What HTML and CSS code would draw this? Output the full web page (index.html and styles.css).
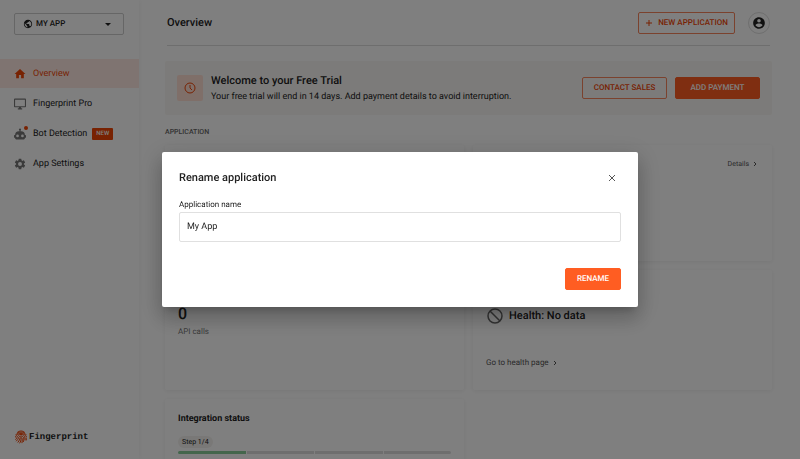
FILE: index.html
```html
<!doctype html>
<html lang="en">
<head>
  <meta charset="utf-8">
  <meta name="viewport" content="width=device-width, initial-scale=1">
  <title>Overview | Fingerprint</title>
  <link rel="stylesheet" href="styles.css">
</head>
<body>
  <div class="app">
    <aside class="sidebar">
      <label class="app-select">
        <svg width="10" height="10" viewBox="0 0 24 24"><path d="M12 2C6.480 2 2 6.480 2 12s4.480 10 10 10 10-4.480 10-10S17.520 2 12 2zm-1 17.930c-3.950-.49-7-3.850-7-7.930 0-.62.080-1.210.21-1.790L9 15v1c0 1.100.9 2 2 2v1.930zm6.900-2.540c-.26-.81-1-1.390-1.900-1.390h-1v-3c0-.55-.45-1-1-1H8v-2h2c.55 0 1-.45 1-1V7h2c1.100 0 2-.9 2-2v-.41c2.930 1.190 5 4.060 5 7.410 0 2.080-.8 3.970-2.100 5.390z"/></svg>
        <select aria-label="Application">
          <option>MY APP</option>
        </select>
        <svg width="6" height="3" viewBox="0 0 10 5"><path d="M0 0l5 5 5-5z"/></svg>
      </label>

      <nav class="nav">
        <a class="nav-item active" href="#">
          <svg width="12" height="12" viewBox="1 2 22 20"><path d="M10 20v-6h4v6h5v-8h3L12 3 2 12h3v8z"/></svg>
          Overview
        </a>
        <a class="nav-item" href="#">
          <svg width="12" height="12" viewBox="1 1 22 22"><path d="M21 2H3C1.900 2 1 2.900 1 4v12c0 1.100.9 2 2 2h7v2H8v2h8v-2h-2v-2h7c1.100 0 2-.9 2-2V4c0-1.100-.9-2-2-2zm0 14H3V4h18v12z"/></svg>
          Fingerprint Pro
        </a>
        <a class="nav-item" href="#">
          <span class="icon-dot">
            <svg width="12" height="12" viewBox="1 1 22 22"><path fill-rule="evenodd" d="M12 2a2 2 0 0 1 2 2c0 .74-.4 1.390-1 1.730V7h1a7 7 0 0 1 7 7h1a1 1 0 0 1 1 1v3a1 1 0 0 1-1 1h-1v1a2 2 0 0 1-2 2H5a2 2 0 0 1-2-2v-1H2a1 1 0 0 1-1-1v-3a1 1 0 0 1 1-1h1a7 7 0 0 1 7-7h1V5.730A2 2 0 0 1 12 2zM7.500 13a2.500 2.500 0 1 0 0 5 2.500 2.500 0 0 0 0-5zm9 0a2.500 2.500 0 1 0 0 5 2.500 2.500 0 0 0 0-5z"/></svg>
          </span>
          Bot Detection
          <span class="tag">NEW</span>
        </a>
        <a class="nav-item" href="#">
          <svg width="12" height="12" viewBox="1 1 22 22"><path fill-rule="evenodd" d="M19.140 12.940c.04-.3.060-.61.060-.94 0-.32-.02-.64-.07-.94l2.030-1.580c.18-.14.23-.41.12-.61l-1.920-3.320c-.12-.22-.37-.29-.59-.22l-2.390.96c-.5-.38-1.030-.7-1.620-.94l-.36-2.540c-.04-.24-.24-.41-.48-.41h-3.840c-.24 0-.43.17-.47.41l-.36 2.540c-.59.24-1.130.57-1.620.94l-2.390-.96c-.22-.08-.47 0-.59.22L2.740 8.870c-.12.21-.08.47.12.61l2.030 1.580c-.05.3-.09.63-.09.94s.02.64.070.94l-2.030 1.580c-.18.14-.23.41-.12.61l1.920 3.320c.12.22.37.29.59.22l2.390-.96c.5.38 1.030.7 1.620.94l.36 2.540c.05.24.24.41.48.41h3.840c.24 0 .44-.17.47-.41l.36-2.540c.59-.24 1.130-.56 1.620-.94l2.390.96c.22.080.47 0 .59-.22l1.920-3.320c.12-.22.070-.47-.12-.61l-2.010-1.580zM12 15.600a3.600 3.600 0 1 1 0-7.200 3.600 3.600 0 0 1 0 7.200z"/></svg>
          App Settings
        </a>
      </nav>

      <a class="logo" href="#">
        <svg width="12" height="14" viewBox="0 0 24 28" fill="none" stroke="currentColor" stroke-width="2" stroke-linecap="round">
          <path d="M5 4.500C9 1 15 1 19 4.500M2 9C6 2.500 18 2.500 22 9M1 14C1 4.500 23 4.500 23 14M1.500 19C5 16 4 9 12 9s8 5 8 11M3 22c5-4 3-10 9-10s6 6 5 11M6 24.500c4-4 3-9.500 6-9.500s3 5 2 10.500M9.500 26c2-3 2.500-5 2.500-8M22.500 17v3"/>
        </svg>
        Fingerprint
      </a>
    </aside>

    <main class="main">
      <header class="header">
        <h1>Overview</h1>
        <button class="btn btn-outline btn-new" type="button">
          <svg width="8" height="8" viewBox="0 0 8 8"><path d="M4 1v6M1 4h6" stroke="currentColor"/></svg>
          NEW APPLICATION
        </button>
        <button class="avatar" type="button" aria-label="Account">
          <svg width="14" height="14" viewBox="0 0 24 24"><path d="M12 2C6.480 2 2 6.480 2 12s4.480 10 10 10 10-4.480 10-10S17.520 2 12 2zm0 3c1.660 0 3 1.340 3 3s-1.340 3-3 3-3-1.340-3-3 1.340-3 3-3zm0 14.200c-2.500 0-4.710-1.280-6-3.220.03-1.990 4-3.080 6-3.080 1.990 0 5.970 1.090 6 3.080-1.290 1.940-3.500 3.220-6 3.220z"/></svg>
        </button>
      </header>

      <section class="banner">
        <span class="banner-icon">
          <svg width="12" height="12" viewBox="0 0 12 12" fill="none" stroke="currentColor"><circle cx="6" cy="6" r="5"/><path d="M6 3v3l2 2"/></svg>
        </span>
        <div class="banner-text">
          <h2>Welcome to your Free Trial</h2>
          <p>Your free trial will end in 14 days. Add payment details to avoid interruption.</p>
        </div>
        <button class="btn btn-outline btn-wide" type="button">CONTACT SALES</button>
        <button class="btn btn-primary btn-wide" type="button">ADD PAYMENT</button>
      </section>

      <h3 class="section-label">APPLICATION</h3>

      <div class="cards">
        <section class="card"></section>
        <section class="card">
          <a class="link details" href="#">Details <svg width="4" height="6" viewBox="0 0 4 6"><path d="M1 1l2 2-2 2"/></svg></a>
        </section>
        <section class="card calls">
          <strong>0</strong>
          <span>API calls</span>
        </section>
        <section class="card health">
          <h2>
            <svg width="18" height="18" viewBox="0 0 18 18" fill="none" stroke="currentColor" stroke-width="1.500"><circle cx="9" cy="9" r="7"/><path d="M4 4l10 10"/></svg>
            Health: No data
          </h2>
          <a class="link" href="#">Go to health page <svg width="4" height="6" viewBox="0 0 4 6"><path d="M1 1l2 2-2 2"/></svg></a>
        </section>
        <section class="card integration">
          <h2>Integration status</h2>
          <span class="step">Step 1/4</span>
          <div class="steps">
            <i class="done"></i><i></i><i></i><i></i>
          </div>
        </section>
      </div>
    </main>
  </div>

  <div class="overlay">
    <form class="modal" role="dialog" aria-modal="true" aria-labelledby="modal-title">
      <div class="modal-head">
        <h2 id="modal-title">Rename application</h2>
        <button class="close" type="button" aria-label="Close">
          <svg width="10" height="10" viewBox="0 0 10 10"><path d="M2 2l6 6M8 2L2 8"/></svg>
        </button>
      </div>
      <label for="app-name">Application name</label>
      <input id="app-name" type="text" value="My App">
      <button class="btn btn-primary btn-rename" type="submit">RENAME</button>
    </form>
  </div>
</body>
</html>
```
FILE: styles.css
```css
* {
  box-sizing: border-box;
  margin: 0;
  padding: 0;
}

body {
  height: 100vh;
  overflow: hidden;
  background: #fff;
  color: #222;
  font: 9px/12px Roboto, "Liberation Sans", sans-serif;
  text-rendering: geometricPrecision;
}

a {
  color: inherit;
  text-decoration: none;
}

h1, h2, h3 {
  font-size: 11px;
  line-height: 14px;
  font-weight: 500;
}

svg {
  flex: none;
  fill: currentColor;
}

svg[fill="none"] {
  fill: none;
}

button, input, select {
  font: inherit;
  color: inherit;
  text-rendering: inherit;
}

.app {
  display: flex;
  height: 100vh;
  overflow: hidden;
}

/* sidebar */
.sidebar {
  display: flex;
  flex-direction: column;
  flex: none;
  width: 139px;
  padding: 13px 0 15px;
  box-shadow: 0 0 6px rgba(0, 0, 0, .06);
}

.app-select {
  display: flex;
  align-items: center;
  gap: 3px;
  height: 22px;
  margin: 0 15px 0 14px;
  padding: 0 12px 0 8px;
  border: 1px solid #ccc;
  border-radius: 2px;
}

.app-select select {
  flex: 1;
  min-width: 0;
  border: 0;
  background: none;
  appearance: none;
  font-size: 8px;
  font-weight: 500;
}

.nav {
  display: grid;
  gap: 1px;
  margin-top: 24px;
}

.nav-item {
  display: flex;
  align-items: center;
  gap: 7px;
  height: 29px;
  padding-left: 14px;
}

.nav-item svg {
  display: block;
  color: #777;
}

.nav-item.active {
  background: #ffe9e2;
  color: #f04405;
}

.nav-item.active svg {
  color: #f04405;
}

.icon-dot {
  position: relative;
}

.icon-dot::after {
  content: "";
  position: absolute;
  top: -2px;
  right: -2px;
  width: 4px;
  height: 4px;
  border-radius: 50%;
  background: #f04405;
}

.tag {
  margin-left: -2px;
  padding: 0 4px;
  border-radius: 1px;
  background: #f04405;
  color: #fff;
  font-size: 6px;
  font-weight: 500;
}

.logo {
  display: flex;
  align-items: center;
  gap: 2px;
  margin-top: auto;
  padding-left: 15px;
  font: bold 9px/14px "Liberation Mono", monospace;
}

.logo svg {
  color: #f04405;
}

/* main */
.main {
  flex: 1;
  min-width: 0;
  padding: 0 28px 0 26px;
}

.header {
  display: flex;
  align-items: center;
  gap: 13px;
  height: 46px;
  margin: 0 2px;
  border-bottom: 1px solid #ddd;
}

.header h1 {
  flex: 1;
}

.btn {
  height: 22px;
  border: 1px solid #f04405;
  border-radius: 2px;
  font-size: 8px;
  font-weight: 500;
}

.btn-outline {
  background: none;
  border-color: #f6855c;
  color: #f04405;
}

.btn-primary {
  background: #ff5d22;
  border-color: #ff5d22;
  color: #fff;
}

.btn-new {
  display: flex;
  align-items: center;
  justify-content: center;
  gap: 5px;
  width: 97px;
}

.btn-wide {
  width: 85px;
}

.avatar {
  display: flex;
  align-items: center;
  justify-content: center;
  width: 22px;
  height: 22px;
  border: 1px solid #ddd;
  border-radius: 50%;
  background: none;
}

.banner {
  display: flex;
  align-items: center;
  gap: 8px;
  height: 54px;
  margin-top: 15px;
  padding: 0 12px;
  border-radius: 2px;
  background: #f9f7f4;
}

.banner-icon {
  display: flex;
  align-items: center;
  justify-content: center;
  width: 26px;
  height: 26px;
  border-radius: 2px;
  background: #ffdfd3;
  color: #f04405;
}

.banner-text {
  flex: 1;
}

.banner-text p {
  margin-top: 3px;
}

.section-label {
  margin: 11px 0 7px;
  color: #666;
  font-size: 7px;
  line-height: 12px;
}

.cards {
  display: grid;
  grid-template-columns: 1fr 1fr;
  grid-template-rows: 116px 120px 120px;
  gap: 9px;
}

.card {
  padding: 13px;
  border-radius: 2px;
  box-shadow: 0 1px 5px rgba(0, 0, 0, .07);
}

.link {
  display: flex;
  align-items: center;
  gap: 4px;
  color: #555;
  font-size: 8px;
}

.link svg {
  fill: none;
  stroke: currentColor;
}

.details {
  justify-content: flex-end;
  padding-right: 2px;
  font-size: 7px;
}

.calls {
  display: flex;
  flex-direction: column;
  padding-top: 34px;
  color: #777;
  font-size: 8px;
}

.calls strong {
  color: #222;
  font-size: 16px;
  line-height: 20px;
  font-weight: 500;
  margin-bottom: 2px;
}

.health {
  padding-top: 37px;
}

.health h2 {
  display: flex;
  align-items: center;
  gap: 5px;
  height: 18px;
  margin-bottom: 32px;
}

.health h2 svg {
  color: #666;
}

.integration h2 {
  font-size: 9px;
  font-weight: 700;
}

.step {
  display: inline-block;
  margin: 10px 0 3px;
  padding: 0 4px;
  border-radius: 6px;
  background: #f3f1ee;
  font-size: 7px;
}

.steps {
  display: grid;
  grid-template-columns: repeat(4, 1fr);
  gap: 1px;
  overflow: hidden;
  border-radius: 2px;
}

.steps i {
  height: 3px;
  background: #ddd;
}

.steps .done {
  background: #8c9;
}

/* rename dialog */
.overlay {
  position: fixed;
  inset: 0;
  display: flex;
  align-items: center;
  justify-content: center;
  background: rgba(0, 0, 0, .5);
}

.modal {
  display: flex;
  flex-direction: column;
  width: 476px;
  max-width: 90%;
  padding: 17px;
  border-radius: 2px;
  background: #fff;
  box-shadow: 0 6px 8px -4px rgba(0, 0, 0, .2), 0 12px 19px 2px rgba(0, 0, 0, .14), 0 5px 23px 4px rgba(0, 0, 0, .12);
}

.modal-head {
  display: flex;
  align-items: center;
  justify-content: space-between;
  height: 18px;
  margin-bottom: 12px;
}

.close {
  display: flex;
  padding: 4px;
  border: 0;
  background: none;
}

.close svg {
  stroke: #555;
}

.modal label {
  font-size: 8px;
}

.modal input {
  height: 30px;
  margin: 1px 0 26px;
  padding: 0 7px;
  border: 1px solid #e0e0e0;
  border-radius: 2px;
}

.btn-rename {
  align-self: flex-end;
  width: 56px;
}
```
